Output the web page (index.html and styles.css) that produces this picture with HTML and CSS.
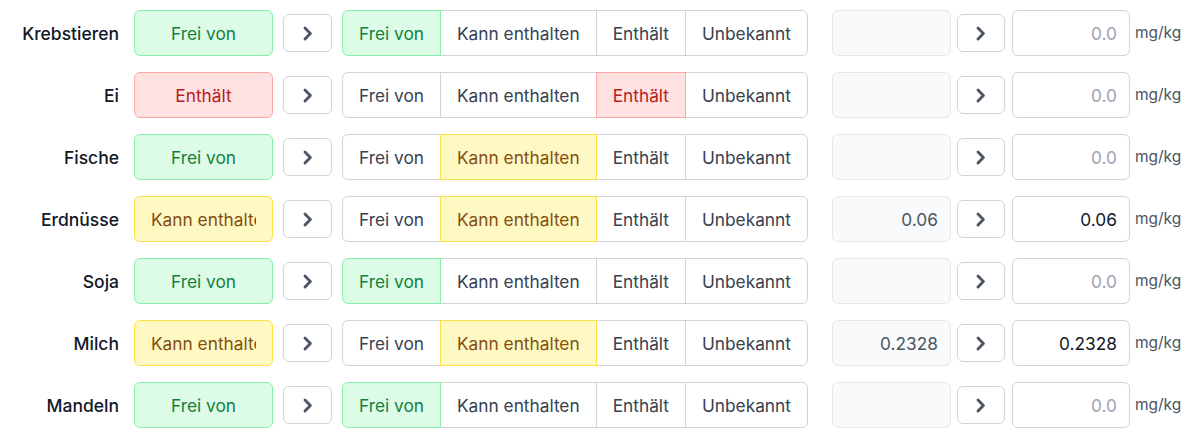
FILE: index.html
```html
<!DOCTYPE html>
<html lang="de">
<head>
<meta charset="utf-8">
<link rel="stylesheet" href="styles.css">
</head>
<body>
<div class="list">
  <div class="row">
    <div class="label">Krebstieren</div>
    <div class="badge free"><span>Frei von</span></div>
    <button class="chev"><svg viewBox="0 0 10 14"><path d="M2.5 2.5 L7 7 L2.5 11.5"/></svg></button>
    <div class="seg">
      <div class="opt free active">Frei von</div><div class="opt">Kann enthalten</div><div class="opt">Enthält</div><div class="opt">Unbekannt</div>
    </div>
    <div class="val src"></div>
    <button class="chev small"><svg viewBox="0 0 10 14"><path d="M2.5 2.5 L7 7 L2.5 11.5"/></svg></button>
    <div class="val dst"><span class="ph">0.0</span></div>
    <div class="unit">mg/kg</div>
  </div>
  <div class="row">
    <div class="label">Ei</div>
    <div class="badge contains"><span>Enthält</span></div>
    <button class="chev"><svg viewBox="0 0 10 14"><path d="M2.5 2.5 L7 7 L2.5 11.5"/></svg></button>
    <div class="seg">
      <div class="opt">Frei von</div><div class="opt">Kann enthalten</div><div class="opt contains active">Enthält</div><div class="opt">Unbekannt</div>
    </div>
    <div class="val src"></div>
    <button class="chev small"><svg viewBox="0 0 10 14"><path d="M2.5 2.5 L7 7 L2.5 11.5"/></svg></button>
    <div class="val dst"><span class="ph">0.0</span></div>
    <div class="unit">mg/kg</div>
  </div>
  <div class="row">
    <div class="label">Fische</div>
    <div class="badge free"><span>Frei von</span></div>
    <button class="chev"><svg viewBox="0 0 10 14"><path d="M2.5 2.5 L7 7 L2.5 11.5"/></svg></button>
    <div class="seg">
      <div class="opt">Frei von</div><div class="opt may active">Kann enthalten</div><div class="opt">Enthält</div><div class="opt">Unbekannt</div>
    </div>
    <div class="val src"></div>
    <button class="chev small"><svg viewBox="0 0 10 14"><path d="M2.5 2.5 L7 7 L2.5 11.5"/></svg></button>
    <div class="val dst"><span class="ph">0.0</span></div>
    <div class="unit">mg/kg</div>
  </div>
  <div class="row">
    <div class="label">Erdnüsse</div>
    <div class="badge may"><span>Kann enthalten</span></div>
    <button class="chev"><svg viewBox="0 0 10 14"><path d="M2.5 2.5 L7 7 L2.5 11.5"/></svg></button>
    <div class="seg">
      <div class="opt">Frei von</div><div class="opt may active">Kann enthalten</div><div class="opt">Enthält</div><div class="opt">Unbekannt</div>
    </div>
    <div class="val src">0.06</div>
    <button class="chev small"><svg viewBox="0 0 10 14"><path d="M2.5 2.5 L7 7 L2.5 11.5"/></svg></button>
    <div class="val dst">0.06</div>
    <div class="unit">mg/kg</div>
  </div>
  <div class="row">
    <div class="label">Soja</div>
    <div class="badge free"><span>Frei von</span></div>
    <button class="chev"><svg viewBox="0 0 10 14"><path d="M2.5 2.5 L7 7 L2.5 11.5"/></svg></button>
    <div class="seg">
      <div class="opt free active">Frei von</div><div class="opt">Kann enthalten</div><div class="opt">Enthält</div><div class="opt">Unbekannt</div>
    </div>
    <div class="val src"></div>
    <button class="chev small"><svg viewBox="0 0 10 14"><path d="M2.5 2.5 L7 7 L2.5 11.5"/></svg></button>
    <div class="val dst"><span class="ph">0.0</span></div>
    <div class="unit">mg/kg</div>
  </div>
  <div class="row">
    <div class="label">Milch</div>
    <div class="badge may"><span>Kann enthalten</span></div>
    <button class="chev"><svg viewBox="0 0 10 14"><path d="M2.5 2.5 L7 7 L2.5 11.5"/></svg></button>
    <div class="seg">
      <div class="opt">Frei von</div><div class="opt may active">Kann enthalten</div><div class="opt">Enthält</div><div class="opt">Unbekannt</div>
    </div>
    <div class="val src">0.2328</div>
    <button class="chev small"><svg viewBox="0 0 10 14"><path d="M2.5 2.5 L7 7 L2.5 11.5"/></svg></button>
    <div class="val dst">0.2328</div>
    <div class="unit">mg/kg</div>
  </div>
  <div class="row">
    <div class="label">Mandeln</div>
    <div class="badge free"><span>Frei von</span></div>
    <button class="chev"><svg viewBox="0 0 10 14"><path d="M2.5 2.5 L7 7 L2.5 11.5"/></svg></button>
    <div class="seg">
      <div class="opt free active">Frei von</div><div class="opt">Kann enthalten</div><div class="opt">Enthält</div><div class="opt">Unbekannt</div>
    </div>
    <div class="val src"></div>
    <button class="chev small"><svg viewBox="0 0 10 14"><path d="M2.5 2.5 L7 7 L2.5 11.5"/></svg></button>
    <div class="val dst"><span class="ph">0.0</span></div>
    <div class="unit">mg/kg</div>
  </div>
</div>
</body>
</html>
```
FILE: styles.css
```css
html, body {
  margin: 0;
  padding: 0;
  background: #ffffff;
  font-family: Inter, "Noto Sans", sans-serif;
  color: #111827;
}
.list {
  display: flex;
  flex-direction: column;
  gap: 16px;
  padding-top: 10px;
}
.row {
  display: flex;
  align-items: center;
  height: 46px;
}
.label {
  width: 119px;
  text-align: right;
  font-size: 17.5px;
  font-weight: 500;
  color: #111827;
  margin-right: 15px;
}
.badge {
  box-sizing: border-box;
  width: 139px;
  height: 46px;
  border: 1px solid;
  border-radius: 6px;
  padding: 0 16px;
  display: flex;
  align-items: center;
  justify-content: center;
  font-size: 17.3px;
  overflow: hidden;
  white-space: nowrap;
}
.badge span {
  display: block;
  overflow: hidden;
  max-width: 100%;
}
.free { background: #dcfce7; border-color: #86efac; color: #15803d; }
.contains { background: #fee2e2; border-color: #fca5a5; color: #b91c1c; }
.may { background: #fef9c3; border-color: #fde047; color: #854d0e; }
.chev {
  box-sizing: border-box;
  width: 49px;
  height: 38px;
  margin-left: 10px;
  margin-right: 10px;
  border: 1px solid #d1d5db;
  border-radius: 6px;
  background: #ffffff;
  padding: 0;
  display: flex;
  align-items: center;
  justify-content: center;
}
.chev svg {
  width: 12px;
  height: 17px;
  fill: none;
  stroke: #4b5563;
  stroke-width: 2.4;
  stroke-linecap: round;
  stroke-linejoin: round;
}
.chev.small {
  width: 48px;
  margin-left: 6px;
  margin-right: 7px;
}
.seg {
  display: flex;
  height: 46px;
  margin-right: 24px;
}
.opt {
  box-sizing: border-box;
  height: 46px;
  padding: 0 16px;
  display: flex;
  align-items: center;
  border: 1px solid #d1d5db;
  margin-left: -1px;
  background: #ffffff;
  font-size: 17.3px;
  color: #374151;
  white-space: nowrap;
  position: relative;
}
.opt:first-child { margin-left: 0; border-radius: 6px 0 0 6px; }
.opt:last-child { border-radius: 0 6px 6px 0; }
.opt.active { z-index: 1; }
.opt.free.active { background: #dcfce7; border-color: #86efac; color: #15803d; }
.opt.contains.active { background: #fee2e2; border-color: #fca5a5; color: #b91c1c; }
.opt.may.active { background: #fef9c3; border-color: #fde047; color: #854d0e; }
.val {
  box-sizing: border-box;
  height: 46px;
  border: 1px solid #d1d5db;
  border-radius: 6px;
  padding: 0 12px;
  display: flex;
  align-items: center;
  justify-content: flex-end;
  font-size: 17.3px;
}
.val.src {
  width: 119px;
  background: #f9fafb;
  border-color: #e5e7eb;
  color: #4b5563;
}
.val.dst {
  width: 118px;
  background: #ffffff;
  color: #111827;
}
.ph { color: #9ca3af; }
.unit {
  margin-left: 5px;
  font-size: 15.5px;
  color: #4b5563;
  padding-bottom: 2px;
}
```
